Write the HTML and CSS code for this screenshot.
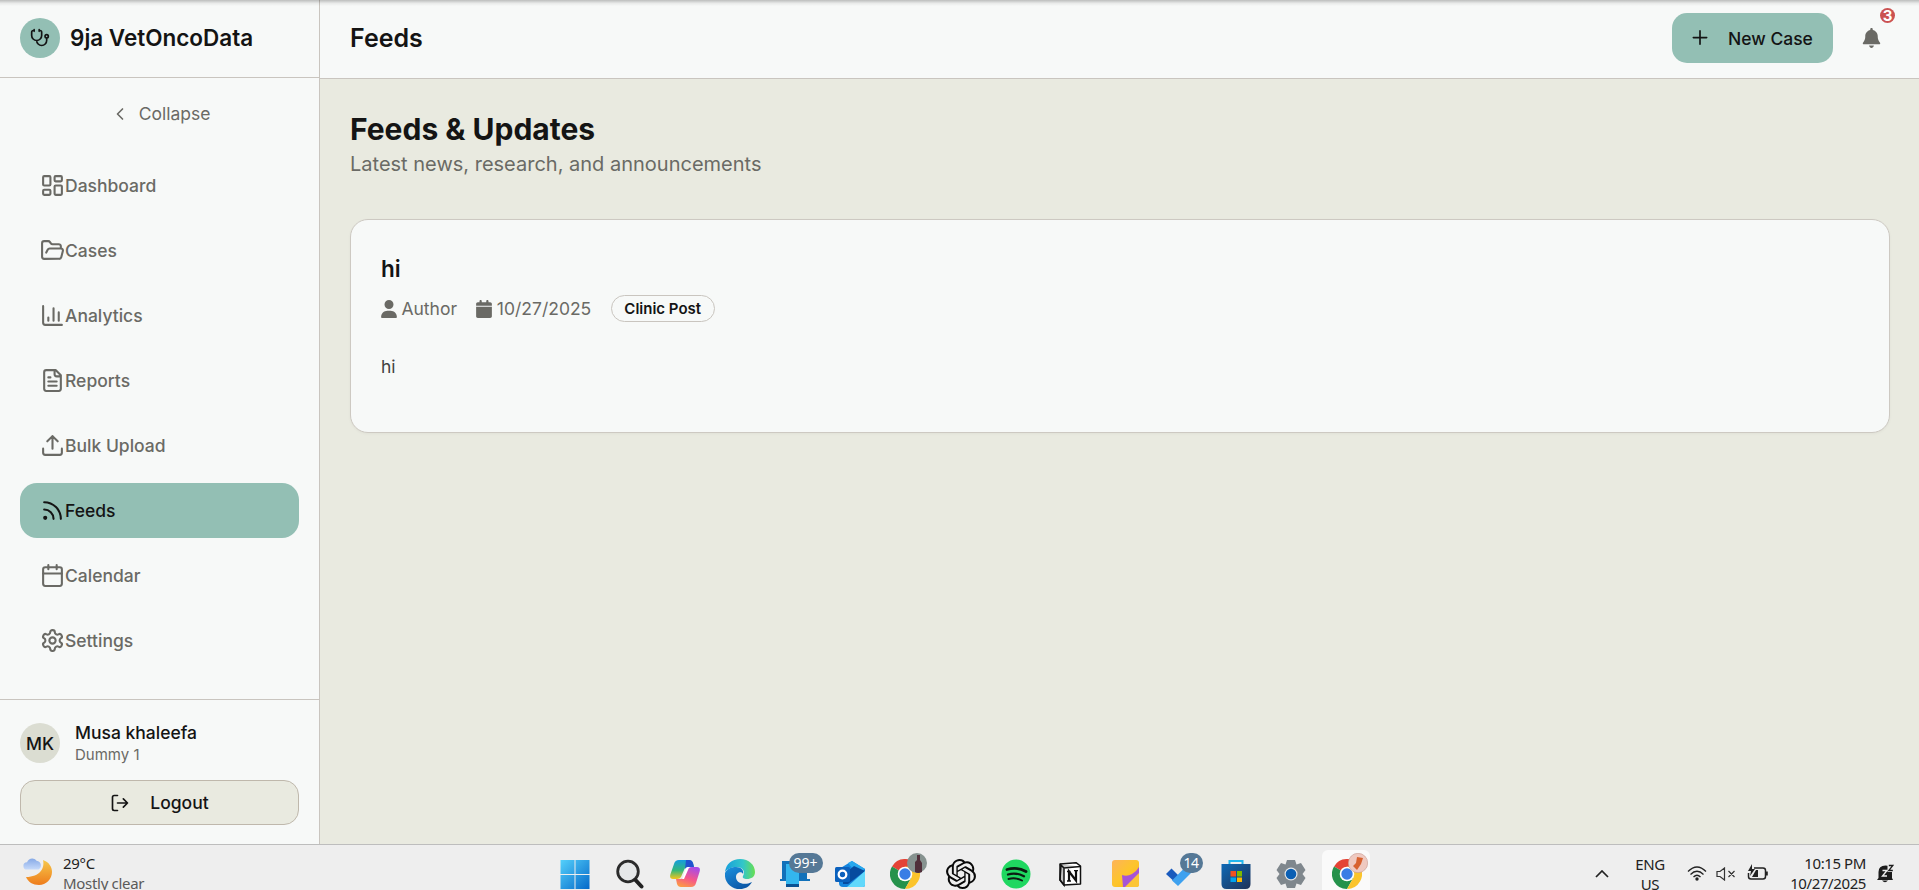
FILE: index.html
```html
<!DOCTYPE html>
<html lang="en">
<head>
<meta charset="utf-8">
<title>9ja VetOncoData</title>
<link rel="stylesheet" href="styles.css">
</head>
<body>
<div class="screen">
  <div class="app">
    <aside class="sidebar">
      <div class="brand">
        <span class="brand-mark"><svg class="ic20" viewBox="0 0 24 24"><path d="M11 2v2M5 2v2M5 3H4a2 2 0 0 0-2 2v4a6 6 0 0 0 12 0V5a2 2 0 0 0-2-2h-1M8 15a6 6 0 0 0 12 0v-3"/><circle cx="20" cy="10" r="2"/></svg></span>
        <span class="brand-name">9ja VetOncoData</span>
      </div>
      <div class="collapse"><svg class="ic20" viewBox="0 0 24 24"><path d="m15 18-6-6 6-6"/></svg><span>Collapse</span></div>
      <nav class="nav">
        <a class="item"><svg viewBox="0 0 24 24"><rect x="3" y="3" width="7" height="9" rx="1"/><rect x="14" y="3" width="7" height="5" rx="1"/><rect x="14" y="12" width="7" height="9" rx="1"/><rect x="3" y="16" width="7" height="5" rx="1"/></svg><span>Dashboard</span></a>
        <a class="item"><svg viewBox="0 0 24 24"><path d="m6 14 1.5-2.9A2 2 0 0 1 9.240 10H20a2 2 0 0 1 1.940 2.500l-1.540 6a2 2 0 0 1-1.950 1.500H4a2 2 0 0 1-2-2V5a2 2 0 0 1 2-2h3.900a2 2 0 0 1 1.690.9l.810 1.200a2 2 0 0 0 1.670.9H18a2 2 0 0 1 2 2v2"/></svg><span>Cases</span></a>
        <a class="item"><svg viewBox="0 0 24 24"><path d="M3 3v16a2 2 0 0 0 2 2h16M18 17V9M13 17V5M8 17v-3"/></svg><span>Analytics</span></a>
        <a class="item"><svg viewBox="0 0 24 24"><path d="M15 2H6a2 2 0 0 0-2 2v16a2 2 0 0 0 2 2h12a2 2 0 0 0 2-2V7ZM14 2v4a2 2 0 0 0 2 2h4M10 9H8M16 13H8M16 17H8"/></svg><span>Reports</span></a>
        <a class="item"><svg viewBox="0 0 24 24"><path d="M12 3v12M17 8l-5-5-5 5M21 15v4a2 2 0 0 1-2 2H5a2 2 0 0 1-2-2v-4"/></svg><span>Bulk Upload</span></a>
        <a class="item active"><svg viewBox="0 0 24 24"><path d="M4 11a9 9 0 0 1 9 9M4 4a16 16 0 0 1 16 16"/><circle cx="5" cy="19" r="1"/></svg><span>Feeds</span></a>
        <a class="item"><svg viewBox="0 0 24 24"><path d="M8 2v4M16 2v4M3 10h18"/><rect x="3" y="4" width="18" height="18" rx="2"/></svg><span>Calendar</span></a>
        <a class="item"><svg viewBox="0 0 24 24"><path d="M12.220 2h-.440a2 2 0 0 0-2 2v.180a2 2 0 0 1-1 1.730l-.430.250a2 2 0 0 1-2 0l-.150-.080a2 2 0 0 0-2.730.730l-.220.380a2 2 0 0 0 .730 2.730l.150.100a2 2 0 0 1 1 1.720v.510a2 2 0 0 1-1 1.740l-.150.090a2 2 0 0 0-.730 2.730l.220.380a2 2 0 0 0 2.730.730l.150-.080a2 2 0 0 1 2 0l.430.250a2 2 0 0 1 1 1.730V20a2 2 0 0 0 2 2h.440a2 2 0 0 0 2-2v-.180a2 2 0 0 1 1-1.730l.430-.250a2 2 0 0 1 2 0l.150.080a2 2 0 0 0 2.730-.730l.220-.390a2 2 0 0 0-.730-2.730l-.150-.080a2 2 0 0 1-1-1.740v-.500a2 2 0 0 1 1-1.740l.150-.090a2 2 0 0 0 .730-2.730l-.220-.380a2 2 0 0 0-2.730-.730l-.150.080a2 2 0 0 1-2 0l-.430-.250a2 2 0 0 1-1-1.730V4a2 2 0 0 0-2-2z"/><circle cx="12" cy="12" r="3"/></svg><span>Settings</span></a>
      </nav>
      <div class="account">
        <div class="user">
          <span class="avatar">MK</span>
          <div class="user-text"><span class="user-name">Musa khaleefa</span><span class="user-sub">Dummy 1</span></div>
        </div>
        <div class="logout"><svg class="ic20" viewBox="0 0 24 24"><path d="M9 21H5a2 2 0 0 1-2-2V5a2 2 0 0 1 2-2h4M16 17l5-5-5-5M21 12H9"/></svg><span>Logout</span></div>
      </div>
    </aside>
    <div class="content">
      <header class="topbar">
        <span class="topbar-title">Feeds</span>
        <div class="actions">
          <div class="new-case"><svg class="ic20" viewBox="0 0 24 24"><path d="M4 11.500h16M12 3.500v16"/></svg><span>New Case</span></div>
          <div class="bell"><svg viewBox="0 0 448 512"><path d="M224 0c-17.700 0-32 14.300-32 32v19.200C119 66 64 130.600 64 208v25.400c0 45.400-15.500 89.500-43.800 124.900L5.300 377c-5.800 7.200-6.900 17.100-2.900 25.400S14.800 416 24 416h400c9.200 0 17.600-5.300 21.600-13.600s2.900-18.200-2.900-25.400l-14.900-18.600c-28.300-35.500-43.800-79.600-43.800-125V208c0-77.400-55-142-128-156.800V32c0-17.700-14.300-32-32-32zm0 512c28 0 54-22 62-64H162c8 42 34 64 62 64z"/></svg><span class="count">3</span></div>
        </div>
      </header>
      <main class="main">
        <h1>Feeds &amp; Updates</h1>
        <p class="lead">Latest news, research, and announcements</p>
        <article class="card">
          <h2>hi</h2>
          <div class="meta">
            <span class="meta-item author"><svg viewBox="0 0 448 512"><path d="M224 256a128 128 0 1 0 0-256 128 128 0 1 0 0 256zm-45.700 48C79.800 304 0 383.800 0 482.300 0 498.700 13.300 512 29.700 512h388.600c16.400 0 29.700-13.300 29.700-29.700C448 383.800 368.200 304 269.700 304z"/></svg><span>Author</span></span>
            <span class="meta-item date"><svg viewBox="0 0 448 512"><path d="M96 32v32H48C21.500 64 0 85.500 0 112v48h448v-48c0-26.500-21.500-48-48-48h-48V32c0-17.700-14.300-32-32-32s-32 14.300-32 32v32H160V32c0-17.700-14.300-32-32-32S96 14.300 96 32zm352 160H0v272c0 26.500 21.500 48 48 48h352c26.500 0 48-21.500 48-48z"/></svg><span>10/27/2025</span></span>
            <span class="tag">Clinic Post</span>
          </div>
          <p class="body-text">hi</p>
        </article>
      </main>
    </div>
  </div>
  <footer class="taskbar">
    <div class="weather">
      <svg class="moon" viewBox="0 0 30 30"><defs><linearGradient id="mo" x1="0" y1="0" x2="0" y2="1"><stop offset="0" stop-color="#f6c84a"/><stop offset="1" stop-color="#ee7c1c"/></linearGradient><linearGradient id="cl" x1="0" y1="0" x2="0" y2="1"><stop offset="0" stop-color="#86a9e6"/><stop offset="1" stop-color="#c6dafa"/></linearGradient></defs><path d="M20 3c2 8-3 17-17 17 2 5 7 8 13 8 7 0 13-6 13-13 0-5-3-10-9-12z" fill="url(#mo)"/><path d="M4 12.500a3.600 3.600 0 0 1 0-7.200C5.500 1 11 0 13.500 3.800c5 .500 6 7 2 8.700z" fill="url(#cl)"/></svg>
      <div class="weather-text"><span>29°C</span><span class="sky">Mostly clear</span></div>
    </div>
    <div class="dock">
      <span class="slot"><svg viewBox="0 0 30 30"><defs><linearGradient id="wi" x1="0" y1="0" x2="1" y2="1"><stop offset="0" stop-color="#54d0fb"/><stop offset="1" stop-color="#0569c9"/></linearGradient></defs><path d="M.500 1h14v14H.500zM15.500 1h14v14h-14zM.500 16h14v14H.500zM15.500 16h14v14h-14z" fill="url(#wi)"/></svg></span>
      <span class="slot"><svg viewBox="0 0 30 30"><circle cx="13" cy="12.500" r="10.300" fill="#e5e7e8" stroke="#2b2b2b" stroke-width="2.800"/><path d="m20.500 21 6 6.500" stroke="#222" stroke-width="4" stroke-linecap="round"/></svg></span>
      <span class="slot"><svg viewBox="0 0 30 30"><defs><linearGradient id="c1" x1="0" y1="0" x2="0" y2="1"><stop offset="0" stop-color="#149cdf"/><stop offset=".55" stop-color="#35b879"/><stop offset="1" stop-color="#f7c51b"/></linearGradient><linearGradient id="c2" x1="0.700" y1="0" x2=".300" y2="1"><stop offset="0" stop-color="#a74be8"/><stop offset=".55" stop-color="#f5568b"/><stop offset="1" stop-color="#fc9a46"/></linearGradient></defs><path d="M9 1h10q3 0 4 3l1 4h-6q-3 0-4 3l-3 7q-1 2-4 2H3q-4 0-2.500-5L4 5q1-4 5-4z" fill="url(#c1)"/><path d="M16 1h3q3 0 4 3l1 4h-6q-2 0-3 2z" fill="#2152cf"/><path d="M22 8h5q4 0 2.500 5L26 24q-1 4-5 4H11q-3 0-4-3l-1-5h4q3 0 4-3l3-7q1-2 5-2z" fill="url(#c2)"/><path d="m16 9-3 9q-.500 2-2 2h3l4-9q.500-2 2-3h-2z" fill="#fff"/></svg></span>
      <span class="slot"><svg viewBox="0 0 30 30"><defs><linearGradient id="e1" x1="0" y1=".5" x2="1" y2=".5"><stop offset="0" stop-color="#189fdc"/><stop offset=".6" stop-color="#32c6c9"/><stop offset="1" stop-color="#68df51"/></linearGradient><linearGradient id="e2" x1="0" y1="0" x2=".6" y2="1"><stop offset="0" stop-color="#1a91df"/><stop offset="1" stop-color="#0c58a7"/></linearGradient></defs><path d="M0 13C1 5 7 0 15 0c9 0 15 6 15 13 0 5-4 7-8 7-3 0-5-1-4-3 3-5-1-9-6-9-6 0-11 3-12 5z" fill="url(#e1)"/><path d="M0 14c2-4 6-6 11-6 6 0 8 4 7 7-1-3-7-2-7 3 0 6 8 9 16 5-3 5-7 7-12 7C6 30-1 23 0 14z" fill="url(#e2)"/></svg></span>
      <span class="slot"><svg viewBox="0 0 30 30"><path d="M2 2h25v18h3v2H0v-2h2z" fill="#1171ba"/><path d="M6 5h13v23H6z" fill="#0a5192"/><path d="M6 5h13v20H6z" fill="#33b6ee"/></svg><span class="badge wide">99+</span></span>
      <span class="slot"><svg viewBox="0 0 30 30"><path d="m4 10 13-8 13 8v16q0 2-2 2H8q-4 0-4-4z" fill="#1585de"/><path d="m13 4 4-2 13 8-8 5z" fill="#27a8ee"/><path d="m19 7 11 5-17 13H8v-9z" fill="#064b9f"/><path d="m30 12-18 16h16q2 0 2-2z" fill="#61d8fb"/><rect y="8" width="15" height="15" rx="1.500" fill="#0b61bd"/><circle cx="7.500" cy="15.500" r="3.800" fill="none" stroke="#fff" stroke-width="2.300"/></svg></span>
      <span class="slot"><svg viewBox="0 0 30 30"><path d="M15 15 2 7.500A15 15 0 0 1 28 7.500z" fill="#e44335"/><path d="M15 15 2 7.500A15 15 0 0 0 15 30l6.500-11.500z" fill="#25924b"/><path d="m15 7.500h13A15 15 0 0 1 15 30l6.500-11.500z" fill="#fbc42c"/><circle cx="15" cy="15" r="7.300" fill="#fff"/><circle cx="15" cy="15" r="5.700" fill="#397de5"/></svg><svg class="profile" viewBox="0 0 20 20"><circle cx="10" cy="10" r="10" fill="#86928f"/><path d="M8 19V9l2-2V2h3v5l2 3v9q-4 2-7 0z" fill="#502f3a"/></svg></span>
      <span class="slot"><svg viewBox="0 0 24 24" class="knot"><path d="M22.282 9.821a5.985 5.985 0 0 0-.516-4.910 6.046 6.046 0 0 0-6.510-2.900A6.065 6.065 0 0 0 4.981 4.182a5.985 5.985 0 0 0-3.998 2.900 6.046 6.046 0 0 0 .743 7.097 5.980 5.980 0 0 0 .511 4.911 6.051 6.051 0 0 0 6.515 2.900A5.985 5.985 0 0 0 13.260 24a6.056 6.056 0 0 0 5.772-4.206 5.990 5.990 0 0 0 3.998-2.900 6.056 6.056 0 0 0-.748-7.073zM13.260 22.430a4.476 4.476 0 0 1-2.876-1.040l.142-.081 4.778-2.758a.795.795 0 0 0 .393-.681v-6.737l2.020 1.169a.071.071 0 0 1 .038.052v5.583a4.504 4.504 0 0 1-4.495 4.493zM3.600 18.304a4.471 4.471 0 0 1-.535-3.014l.142.085 4.783 2.758a.771.771 0 0 0 .780 0l5.843-3.368v2.332a.080.080 0 0 1-.034.062L9.740 19.950a4.499 4.499 0 0 1-6.140-1.646zM2.341 7.896a4.485 4.485 0 0 1 2.366-1.973V11.600a.766.766 0 0 0 .388.677l5.814 3.354-2.020 1.169a.076.076 0 0 1-.071 0l-4.830-2.787A4.504 4.504 0 0 1 2.341 7.896zm16.597 3.856-5.833-3.388 2.015-1.164a.076.076 0 0 1 .071 0l4.830 2.792a4.494 4.494 0 0 1-.676 8.104v-5.677a.790.790 0 0 0-.407-.667zm2.010-3.024-.142-.085-4.774-2.781a.776.776 0 0 0-.785 0L9.409 9.230V6.897a.066.066 0 0 1 .028-.061l4.830-2.787a4.499 4.499 0 0 1 6.680 4.660zM8.307 12.863l-2.020-1.164a.080.080 0 0 1-.038-.057V6.075a4.499 4.499 0 0 1 7.375-3.454l-.142.081L8.704 5.460a.795.795 0 0 0-.393.681zm1.097-2.366 2.602-1.500 2.607 1.500v2.999l-2.597 1.500-2.607-1.500z" fill="#0a0a0a"/></svg></span>
      <span class="slot"><svg viewBox="0 0 30 30"><circle cx="15" cy="15" r="14.500" fill="#1fd760"/><path d="M6 10.500q10-3 19 2" stroke-width="2.800" stroke="#0c1c12" fill="none" stroke-linecap="round"/><path d="M7 15.500q8-2.500 16 1.800" stroke-width="2.300" stroke="#0c1c12" fill="none" stroke-linecap="round"/><path d="M7.500 20q7-2 13.500 1.500" stroke-width="1.900" stroke="#0c1c12" fill="none" stroke-linecap="round"/></svg></span>
      <span class="slot"><svg viewBox="0 0 30 30"><path d="m4 5 16-1.300 4.500 3.300v18L8 26l-4-5z" fill="#fff" stroke="#111" stroke-width="1.500" stroke-linejoin="round"/><path d="m4 5.500 4 3.500 16.500-1.500M8 9v17M5 6l3 3v17l-4-5z" stroke="#111" stroke-width="1.500" fill="#111" fill-opacity=".25"/><path d="M13 22V12.500l7 9V11.500" stroke="#111" stroke-width="2.200" fill="none"/><path d="M11 12.500h3.500M18 11.700h4M11 22h4" stroke="#111" stroke-width="1.300" fill="none"/></svg></span>
      <span class="slot"><svg viewBox="0 0 30 30"><defs><linearGradient id="st" x1="0" y1="0" x2="1" y2="1"><stop offset="0" stop-color="#fdb35b"/><stop offset=".5" stop-color="#fdc52b"/><stop offset="1" stop-color="#fbb31f"/></linearGradient></defs><rect x="1" y="1" width="27" height="27" rx="3" fill="url(#st)"/><path d="M28 8v7L15 28h-3l-1-12q5 2 10-1 5-3 7-7z" fill="#a653d6"/><path d="M28 14v12q0 2-2 2H14z" fill="#fcc536"/></svg></span>
      <span class="slot"><svg viewBox="0 0 30 30"><path d="m0 15 5.500-5.500 11 11L12 26z" fill="#195abd"/><path d="m6 21.500 18-18 6 5.500-18 18z" fill="#3ea1ef"/></svg><span class="badge">14</span></span>
      <span class="slot"><svg viewBox="0 0 30 30"><defs><linearGradient id="sr" x1="0" y1="0" x2="1" y2="1"><stop offset="0" stop-color="#0d69b6"/><stop offset="1" stop-color="#203257"/></linearGradient></defs><path d="M8.500 5V2h13v3" stroke="#22b6ee" stroke-width="2" fill="none"/><path d="M.500 5h29v20q0 5-5 5h-19q-5 0-5-5z" fill="url(#sr)"/><path d="M9.500 12H15v5.500H9.500z" fill="#f25022"/><path d="M16 12h5v5.500h-5z" fill="#7fba00"/><path d="M9.500 18.500H15V23H9.500z" fill="#00a4ef"/><path d="M16 18.500h5V23h-5z" fill="#ffb900"/></svg></span>
      <span class="slot"><svg viewBox="0 0 30 30"><path d="M11 1h8l1.500 4.500L25 4l4.500 7-3 4 3 4-4.500 7-4.500-1.500L19 29h-8l-1.500-4.500L5 26 .500 19l3-4-3-4L5 4l4.500 1.500z" fill="#7f878d"/><circle cx="15" cy="15" r="6.500" fill="#e4e7e9"/><circle cx="15" cy="15" r="5.300" fill="#0a5fb4"/></svg></span>
      <span class="slot current"><svg viewBox="0 0 30 30"><path d="M15 15 2 7.500A15 15 0 0 1 28 7.500z" fill="#e44335"/><path d="M15 15 2 7.500A15 15 0 0 0 15 30l6.500-11.500z" fill="#25924b"/><path d="m15 7.500h13A15 15 0 0 1 15 30l6.500-11.500z" fill="#fbc42c"/><circle cx="15" cy="15" r="7.300" fill="#fff"/><circle cx="15" cy="15" r="5.700" fill="#397de5"/></svg><svg class="profile" viewBox="0 0 20 20"><circle cx="10" cy="10" r="9.700" fill="#efc9c0" stroke="#c6998f" stroke-width=".6"/><path d="m9 4 6 1-2 6-4 6-4-4 3-3z" fill="#d8622f"/></svg></span>
    </div>
    <div class="tray">
      <svg class="chev" viewBox="0 0 14 8"><path d="m1 7 6-6 6 6" fill="none" stroke="#222" stroke-width="1.700"/></svg>
      <div class="lang"><span>ENG</span><span>US</span></div>
      <svg class="wifi" viewBox="0 0 20 15"><path d="M1 5.500q9-9 18 0M3.500 8.500q6.500-6.500 13 0M6.500 11q3.500-3.500 7 0" fill="none" stroke="#222" stroke-width="1.300"/><circle cx="10" cy="13" r="1.700" fill="#222"/></svg>
      <svg class="mute" viewBox="0 0 20 14"><path d="M1 4.500h3L8.500 1v12L4 9.500H1zM12.500 4l6 6M18.500 4l-6 6" fill="none" stroke="#333" stroke-width="1.200"/></svg>
      <svg class="battery" viewBox="0 0 22 17"><path d="M7 4h9q2.500 0 2.500 2.500v6Q18.500 15 16 15H4q-2.500 0-2.500-2.500V9" fill="none" stroke="#222" stroke-width="1.500"/><path d="M19 7.500h1.800v4H19zM5 13l4-7h2v7zM5 0 1 7h3l-1 5 5-7H5z" fill="#222"/></svg>
      <div class="clock"><span>10:15 PM</span><span>10/27/2025</span></div>
      <svg class="alerts" viewBox="0 0 17 19"><path d="M1.500 14V8q0-6.500 7-6.500 5 0 6.500 4.500v8l1 2H0z" fill="#1c1c1c"/><path d="M5 16.500h6q-3 3.500-6 0z" fill="#1c1c1c"/><path d="M10.500 0h6.500v8h-6.500z" fill="#eee"/><path d="M5.500 6.500h4.500l-4.500 5.500h4.500" stroke="#eee" fill="none" stroke-width="1.400"/><path d="M11.800 1.500h4l-4 5h4" stroke="#1c1c1c" fill="none" stroke-width="1.300"/></svg>
    </div>
  </footer>
</div>
</body>
</html>
```

FILE: styles.css
```css
* { box-sizing: border-box; }
body { margin: 0; font-family: Inter, "Liberation Sans", sans-serif; font-size: 17.5px; color: #141414; background: #e9eae0; overflow: hidden; }
svg { display: block; flex: none; }
h1, h2, p { margin: 0; }
.screen { position: relative; width: 1919px; height: 890px; display: flex; flex-direction: column; overflow: hidden; }
.screen::before { content: ""; position: absolute; left: 0; top: 0; right: 0; height: 6px; background: linear-gradient(rgba(0,0,0,.24), rgba(0,0,0,.06) 55%, transparent); }
.app { height: 844px; display: flex; }
.sidebar { width: 320px; background: #f7f9f8; border-right: 1px solid #c9c5bf; display: flex; flex-direction: column; }
.brand { height: 78px; padding: 0 20px 2px; border-bottom: 1px solid #c9c5bf; display: flex; align-items: center; gap: 10px; }
.brand-mark { width: 40px; height: 40px; border-radius: 50%; background: #93bfb4; display: grid; place-items: center; }
.brand-name { font-size: 22.5px; font-weight: 600; }
.ic20 { width: 20px; height: 20px; }
.ic20, .item svg { fill: none; stroke: currentColor; stroke-width: 2; stroke-linecap: round; stroke-linejoin: round; }
.collapse { height: 72px; padding: 0 0 1px; margin-right: -1px; display: flex; align-items: center; justify-content: center; gap: 9px; color: #6a6a65; }
.nav { display: flex; flex-direction: column; gap: 10px; padding: 8px 20px 0; flex: 1; }
.item { height: 55px; padding-left: 20px; border-radius: 17px; display: flex; align-items: center; color: #6a6a65; font-weight: 500; }
.item svg { width: 25px; height: 25px; }
.active { background: #93bfb4; color: #141414; }
.account { height: 145px; border-top: 1px solid #c9c5bf; padding: 19px 20px 0; display: flex; flex-direction: column; gap: 13px; }
.user { height: 48px; display: flex; align-items: center; gap: 15px; }
.avatar { width: 40px; height: 40px; border-radius: 50%; background: #dbddd2; display: grid; place-items: center; font-weight: 500; }
.user-text { display: flex; flex-direction: column; }
.user-name { font-weight: 500; line-height: 24px; }
.user-sub { font-size: 15px; line-height: 20px; color: #6a6a65; }
.logout { height: 45px; border: 1px solid #bfb8ac; border-radius: 15px; background: #e9eae0; display: flex; align-items: center; justify-content: center; gap: 20px; font-weight: 500; }
.content { flex: 1; display: flex; flex-direction: column; }
.topbar { height: 79px; background: #f7f9f8; border-bottom: 1px solid #c9c5bf; padding: 0 30px 2px; display: flex; align-items: center; justify-content: space-between; }
.topbar-title { font-size: 25px; font-weight: 600; }
.actions { display: flex; align-items: center; gap: 29px; }
.new-case { width: 161px; height: 50px; border-radius: 15px; background: #93bfb4; display: flex; align-items: center; padding-left: 18px; gap: 18px; font-weight: 500; }
.bell { position: relative; width: 19px; height: 20px; margin-right: 8px; }
.bell svg { width: 19px; height: 20px; fill: #6a6a65; }
.count { position: absolute; left: 18px; top: -20px; width: 15px; height: 15px; border-radius: 50%; background: #cb5252; color: #fff; font-size: 15px; line-height: 15px; font-weight: 700; text-align: center; }
.main { padding: 30px 29px 0 30px; }
h1 { font-size: 30px; line-height: 40px; font-weight: 700; }
.lead { font-size: 20px; line-height: 30px; color: #6a6a65; }
.card { margin-top: 40px; height: 214px; border: 1px solid #cdc9c2; border-radius: 18px; background: #f7f9f8; padding: 30px; box-shadow: 0 1px 3px rgba(0,0,0,.04); }
h2 { font-size: 22.5px; line-height: 37px; font-weight: 600; }
.meta { display: flex; align-items: center; height: 27px; margin-top: 8px; color: #6a6a65; gap: 19.5px; }
.meta-item { display: flex; align-items: center; gap: 4.4px; }
.meta-item svg { width: 16px; height: 18px; fill: #6a6a65; }
.tag { height: 27px; width: 104px; border: 1px solid #c9c5bf; border-radius: 14px; color: #141414; font-size: 15px; line-height: 25px; font-weight: 600; text-align: center; }
.body-text { margin-top: 31px; line-height: 28px; color: #414141; }
.taskbar { height: 46px; background: #eee; border-top: 1px solid #bdbdbd; position: relative; display: flex; justify-content: space-between; font-family: "Noto Sans", sans-serif; font-size: 15px; color: #222; }
.weather { width: 547px; padding-left: 23px; display: flex; gap: 10px; }
.moon { width: 30px; height: 30px; margin-top: 12px; }
.weather-text, .clock, .lang { display: flex; flex-direction: column; line-height: 20px; padding-top: 8px; letter-spacing: -.3px; white-space: nowrap; }
.sky { color: #5a5a5a; }
.dock { display: flex; width: 827px; }
.slot { position: relative; flex: 1; height: 45px; display: flex; justify-content: center; padding-top: 14px; }
.slot > svg { width: 30px; height: 30px; position: relative; }
.slot > .profile { position: absolute; width: 20px; height: 20px; left: 29px; top: 8px; }
.current::before { content: ""; position: absolute; left: 3px; right: 4px; top: 5px; height: 50px; border-radius: 6px; background: #fafafa; }
.badge { position: absolute; left: 26px; top: 8px; width: 23px; height: 20px; border-radius: 10px; background: #557896; color: #fff; font-size: 14px; line-height: 20px; text-align: center; letter-spacing: -.4px; }
.wide { width: 34px; left: 21px; letter-spacing: 0; }
.tray { width: 545px; display: flex; justify-content: flex-end; padding-right: 25px; }
.chev { width: 14px; height: 8px; margin: 25px 27px 0 0; }
.lang { width: 28px; margin-right: 23px; padding-top: 9px; align-items: center; }
.wifi { width: 20px; height: 15px; margin: 21px 9px 0 0; }
.mute { width: 20px; height: 14px; margin: 22px 11px 0 0; }
.battery { width: 22px; height: 17px; margin: 19px 20px 0 0; }
.clock { width: 77px; margin-right: 11px; align-items: flex-end; letter-spacing: -.4px; }
.alerts { width: 17px; height: 19px; margin-top: 19px; }
```
